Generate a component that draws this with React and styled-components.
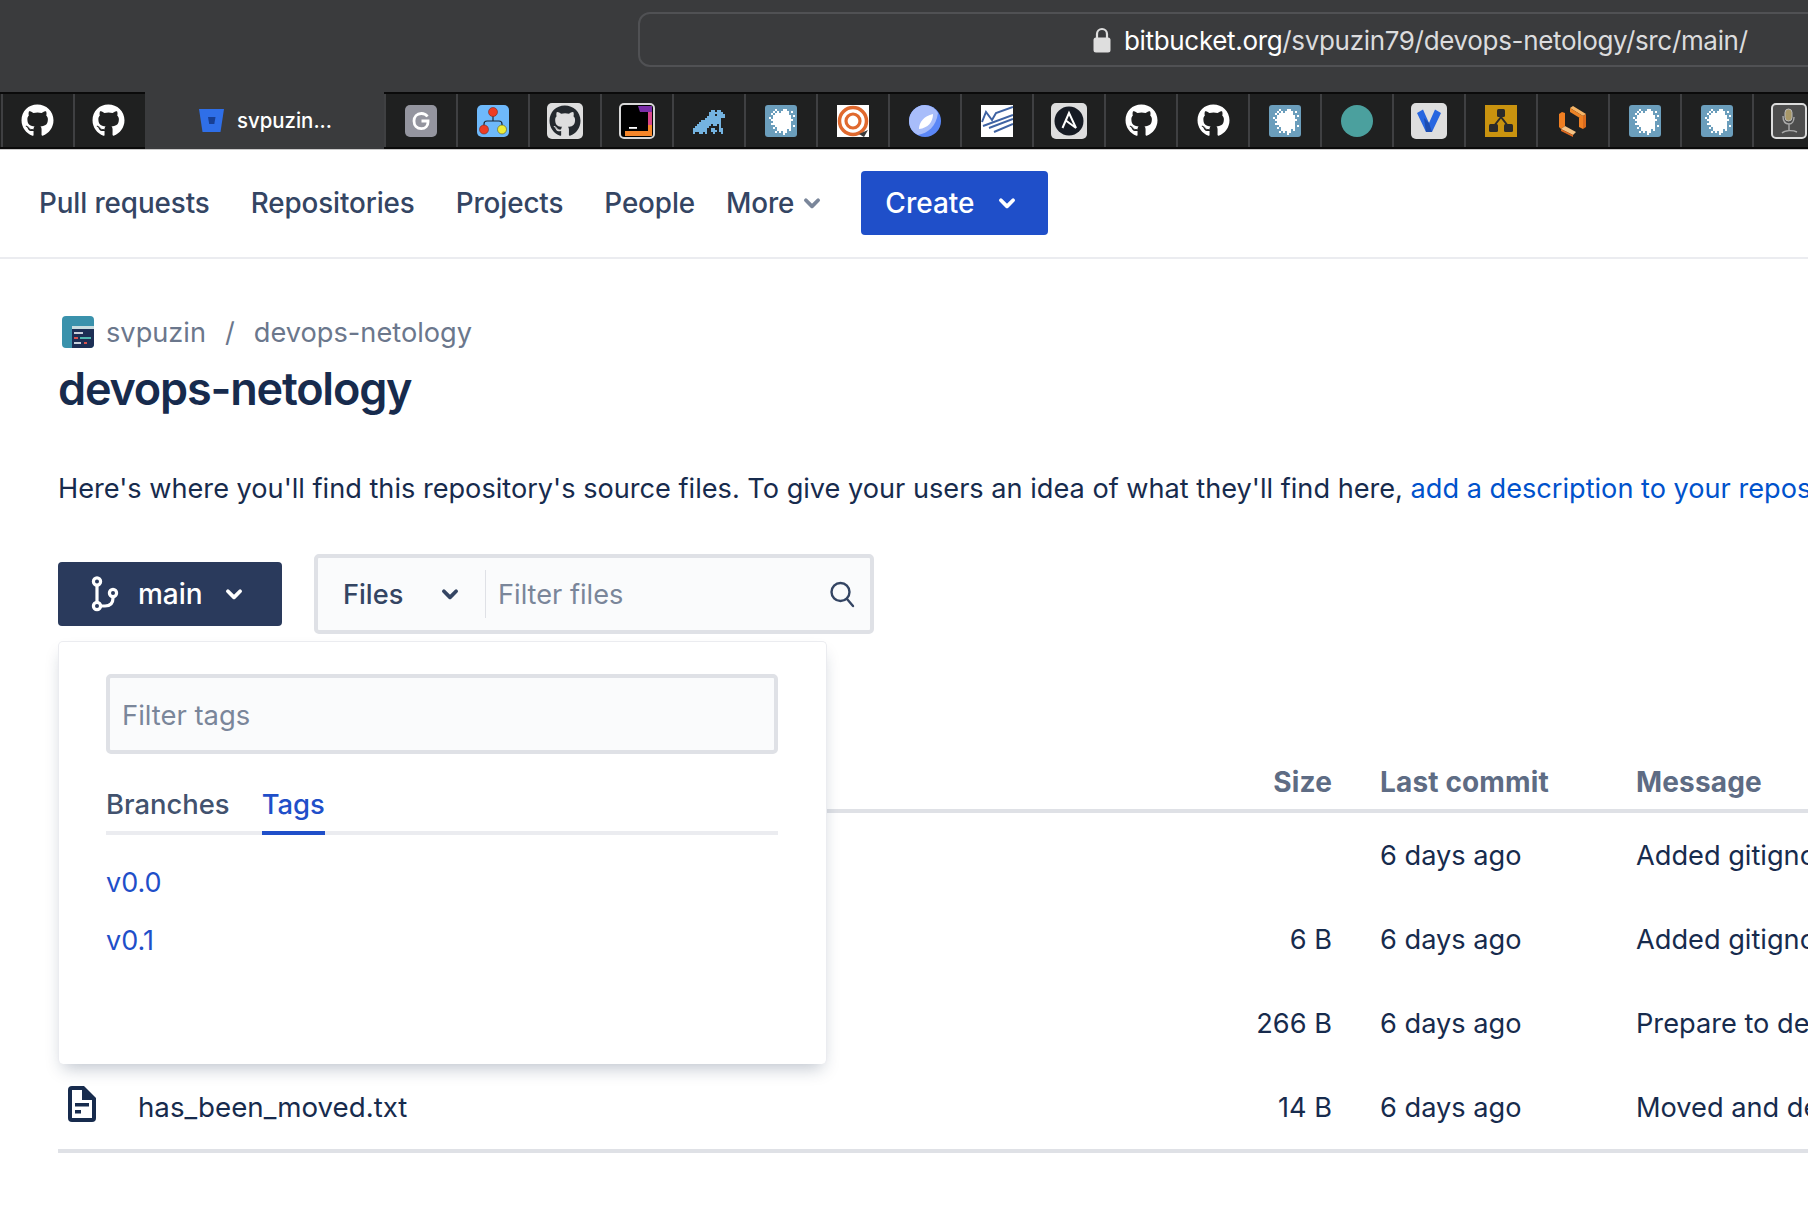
import React from 'react';
import styled, { createGlobalStyle } from 'styled-components';
import { FaGithub } from 'react-icons/fa';

const GlobalStyle = createGlobalStyle`
  html, body {
    margin: 0;
    padding: 0;
    background: #fff;
    font-family: Inter, "Noto Sans", sans-serif;
    color: #172b4d;
  }
`;

const Page = styled.div`
  width: 1808px;
  height: 1218px;
  overflow: hidden;
  background: #fff;
`;

const Toolbar = styled.div`
  height: 92px;
  box-sizing: border-box;
  padding: 12px 0 0 638px;
  background: #3a3b3d;
`;

const AddressBar = styled.div`
  width: 1300px;
  height: 55px;
  box-sizing: border-box;
  display: flex;
  align-items: center;
  gap: 13px;
  padding-left: 453px;
  border: 2px solid #505154;
  border-radius: 12px;
`;

const Url = styled.span`
  padding-top: 2px;
  font-size: 26px;
  letter-spacing: -0.33px;
  white-space: nowrap;
  color: #dcdcdd;
  b {
    font-weight: 400;
    color: #fff;
  }
`;

const TabStrip = styled.div`
  height: 57px;
  box-sizing: border-box;
  display: flex;
  padding-left: 1px;
  background: #1f2020;
  border-top: 2px solid #0a0a0a;
  border-bottom: 2px solid #0a0a0a;
  box-shadow: 0 1px 0 #c9c9c9;
`;

const Tab = styled.div`
  flex: 0 0 72px;
  box-sizing: border-box;
  display: flex;
  align-items: center;
  justify-content: center;
  padding-right: ${props => props.$nudge || 0}px;
  border-left: 2px solid #3f4042;
  color: #fff;
  font-size: 33px;
`;

const ActiveTab = styled.div`
  flex: 0 0 239px;
  box-sizing: border-box;
  display: flex;
  align-items: center;
  gap: 13px;
  padding-left: 54px;
  margin: -2px 0 -2px 0;
  background: #3a3b3d;
  color: #fff;
  font-size: 20.4px;
  font-weight: 500;
`;

const Nav = styled.nav`
  height: 110px;
  box-sizing: border-box;
  display: flex;
  align-items: center;
  padding-left: 39px;
  border-bottom: 2px solid #ebecf0;
`;

const NavLink = styled.a`
  display: flex;
  align-items: center;
  gap: 8px;
  margin-right: ${props => props.$gap}px;
  font-size: 27.8px;
  font-weight: 500;
  letter-spacing: -0.1px;
  color: #344563;
`;

const CreateButton = styled.button`
  width: 187px;
  height: 64px;
  display: flex;
  align-items: center;
  gap: 22px;
  padding: 0 0 0 24px;
  border: 0;
  border-radius: 4px;
  background: #1f4fc9;
  color: #fff;
  font-family: inherit;
  font-size: 28px;
  font-weight: 500;
`;

const Content = styled.main`
  padding: 55px 0 0 58px;
`;

const Breadcrumbs = styled.div`
  display: flex;
  align-items: center;
  height: 36px;
  margin-left: 4px;
  font-size: 27.2px;
  color: #6b778c;
  white-space: nowrap;
`;

const CrumbSeparator = styled.span`
  margin: 0 19px;
`;

const Title = styled.h1`
  margin: 11px 0 0;
  font-size: 45px;
  line-height: 56px;
  font-weight: 600;
  letter-spacing: -1.2px;
  color: #172b4d;
`;

const Description = styled.p`
  margin: 54px 0 0;
  font-size: 27.15px;
  line-height: 36px;
  white-space: nowrap;
  color: #172b4d;
  a {
    color: #0052cc;
  }
`;

const Controls = styled.div`
  position: relative;
  display: flex;
  align-items: center;
  gap: 32px;
  margin-top: 47px;
`;

const BranchButton = styled.button`
  width: 224px;
  height: 64px;
  display: flex;
  align-items: center;
  padding: 0 0 0 33px;
  border: 0;
  border-radius: 4px;
  background: #2a3a5c;
  color: #fff;
  font-family: inherit;
  font-size: 28px;
  font-weight: 500;
`;

const BranchName = styled.span`
  margin: 0 21px 0 18px;
`;

const FilterBox = styled.div`
  width: 560px;
  height: 80px;
  box-sizing: border-box;
  display: flex;
  align-items: center;
  padding-left: 25px;
  border: 4px solid #dfe1e6;
  border-radius: 5px;
  background: #fafbfc;
`;

const FilesLabel = styled.span`
  width: 97px;
  font-size: 27.2px;
  font-weight: 500;
  color: #344563;
`;

const FilterDivider = styled.span`
  width: 1px;
  height: 48px;
  margin: 0 12px 0 25px;
  background: #dfe1e6;
`;

const Placeholder = styled.span`
  flex: 1;
  padding-top: 1px;
  font-size: 27.2px;
  color: #7a869a;
`;

const SearchIcon = styled.svg`
  width: 28px;
  height: 28px;
  margin-right: 14px;
`;

const Dropdown = styled.div`
  position: absolute;
  top: 87px;
  left: 0;
  z-index: 2;
  width: 769px;
  height: 423px;
  box-sizing: border-box;
  padding: 32px 48px 0 47px;
  border: 1px solid #ebecf0;
  border-bottom: 0;
  border-radius: 5px;
  background: #fff;
  box-shadow: 0 9px 16px -5px rgba(23, 43, 77, 0.28);
`;

const TagFilter = styled.div`
  height: 80px;
  box-sizing: border-box;
  display: flex;
  align-items: center;
  padding: 1px 0 0 12px;
  border: 4px solid #dfe1e6;
  border-radius: 5px;
  background: #fafbfc;
  font-size: 27.4px;
  color: #7a869a;
`;

const DropdownTabs = styled.div`
  display: flex;
  gap: 32px;
  margin-top: 31px;
  border-bottom: 4px solid #ebecf0;
`;

const DropdownTab = styled.div`
  height: 46px;
  margin-bottom: -4px;
  border-bottom: 4px solid ${props => (props.$active ? '#1f4fc9' : 'transparent')};
  font-size: 27.4px;
  line-height: 38px;
  font-weight: 500;
  color: ${props => (props.$active ? '#1f4fc9' : '#42526e')};
`;

const TagList = styled.div`
  display: flex;
  flex-direction: column;
  gap: 22px;
  margin-top: 30px;
`;

const TagLink = styled.a`
  font-size: 27px;
  line-height: 36px;
  color: #1f4fc9;
`;

const Table = styled.div`
  margin-top: 131px;
  border-bottom: 4px solid #dfe1e6;
`;

const HeadRow = styled.div`
  display: grid;
  grid-template-columns: 1192px 130px 256px 172px;
  height: 44px;
  border-bottom: 4px solid #dfe1e6;
  font-size: 28px;
  font-weight: 700;
  letter-spacing: 0.15px;
  color: #5e6c84;
  white-space: nowrap;
`;

const Row = styled.div`
  display: grid;
  grid-template-columns: 1192px 130px 256px 172px;
  align-items: center;
  height: 84px;
  font-size: 27.2px;
  white-space: nowrap;
  color: #172b4d;
`;

const NameCell = styled.div`
  display: flex;
  align-items: center;
  gap: 42px;
  padding-left: 10px;
  font-size: 27.7px;
`;

const SizeCell = styled.div`
  padding-right: 48px;
  text-align: right;
`;

const MessageCell = styled.div`
  overflow: hidden;
`;

const PixelArt = ({ rows, color }) => (
  <g shapeRendering="crispEdges">
    {rows.map((row, y) =>
      row.split('').map((cell, x) =>
        cell === '#' ? <rect key={`${x}-${y}`} x={x} y={y} width="1" height="1" fill={color} /> : null
      )
    )}
  </g>
);

const splatRows = [
  '................',
  '................',
  '.....#...##.....',
  '....#.#.####.#..',
  '...#.#######....',
  '....#########.#.',
  '..#.#########...',
  '...###########..',
  '....#########...',
  '...##########...',
  '.....########.#.',
  '....#.#######...',
  '......#####.#...',
  '.....#.#.##.....',
  '.........#......',
  '................',
];

const frogRows = [
  '..................',
  '..........##.##...',
  '.........#######..',
  '.........###.####.',
  '........#########.',
  '.......########...',
  '.....##########...',
  '....###########...',
  '...#######.##.#...',
  '..#######.....#...',
  '.#######..##..##..',
  '.#######..###.##..',
  '.#..##.#...#...#..',
];

const Splat = () => (
  <svg width="32" height="32" viewBox="0 0 16 16">
    <rect width="16" height="16" rx="1.500" fill="#6b9ebc" />
    <PixelArt rows={splatRows} color="#fff" />
  </svg>
);

const Frog = () => (
  <svg width="36" height="26" viewBox="0 0 18 13">
    <PixelArt rows={frogRows} color="#74b3e0" />
  </svg>
);

const LetterG = () => (
  <svg width="32" height="32" viewBox="0 0 32 32">
    <rect width="32" height="32" rx="5" fill="#94959f" />
    <path d="M22.5 11.5a7.6 7.6 0 0 0-6.2-3c-4.4 0-7.3 3.2-7.3 7.6s2.900 7.500 7.300 7.500c4 0 6.700-2.600 6.700-6.700v-.9h-6.500" fill="none" stroke="#fff" strokeWidth="2.800" />
  </svg>
);

const TreeIcon = () => (
  <svg width="32" height="32" viewBox="0 0 32 32">
    <rect width="32" height="32" rx="5" fill="#6eb9fb" />
    <path d="M16 10v6M7 21v-2q0-3 3-3h12q3 0 3 3v2" fill="none" stroke="#1d2b3a" strokeWidth="1.200" />
    <circle cx="16" cy="7" r="4.500" fill="#ee3c24" stroke="#7a2a20" strokeWidth=".6" />
    <circle cx="7" cy="24.500" r="4.500" fill="#ee3c24" stroke="#7a2a20" strokeWidth=".6" />
    <circle cx="25" cy="24.500" r="4.500" fill="#ecec3a" stroke="#55552a" strokeWidth=".6" />
  </svg>
);

const GreyTile = styled.div`
  width: 36px;
  height: 36px;
  display: flex;
  align-items: center;
  justify-content: center;
  border-radius: 5px;
  background: #dedede;
  color: ${props => props.$color || '#24292e'};
  font-size: 32px;
`;

const JetBrains = () => (
  <svg width="36" height="36" viewBox="0 0 36 36">
    <rect x="1" y="1" width="34" height="34" rx="4" fill="#000" stroke="#d8d8d8" strokeWidth="2" />
    <path d="M19 3h14v14h-4v-8h-8z" fill="#7b2ea8" />
    <path d="M29 9h4v15h-4z" fill="#d8458a" />
    <path d="M6 33v-5h23v-6h4v11z" fill="#f5862a" />
    <rect x="10" y="24" width="8" height="1.800" fill="#fff" />
  </svg>
);

const Target = () => (
  <svg width="32" height="32" viewBox="0 0 32 32">
    <rect width="32" height="32" fill="#fff" />
    <circle cx="16" cy="16" r="13.500" fill="none" stroke="#e0692e" strokeWidth="3.500" />
    <circle cx="16" cy="16" r="7" fill="none" stroke="#e0692e" strokeWidth="3.200" />
    <path d="M31 25l-4 7-5-3z" fill="#3a3a3a" />
  </svg>
);

const LeafCircle = () => (
  <svg width="32" height="32" viewBox="0 0 32 32">
    <circle cx="16" cy="16" r="16" fill="#5b87f7" />
    <path d="M16 0a16 16 0 0 0-16 16c0 6 3 11 9 14 10-2 18-8 20-22A16 16 0 0 0 16 0z" fill="#a8bdfa" />
    <path d="M10 24c0-7 5-13 14-15 0 8-5 14-14 15z" fill="#fff" />
  </svg>
);

const Stripes = () => (
  <svg width="32" height="32" viewBox="0 0 32 32">
    <rect width="32" height="32" fill="#fff" />
    <path d="M1 17l4-10 6 8 4-7 17-6M2 21l30-11M8 23l24-9M13 27l19-8" fill="none" stroke="#3f63a3" strokeWidth="2" />
  </svg>
);

const Ansible = () => (
  <GreyTile>
    <svg width="30" height="30" viewBox="0 0 30 30">
      <circle cx="15" cy="15" r="14.500" fill="#161b24" />
      <path d="M8.500 22L15 7l7 15-9.500-7" fill="none" stroke="#fff" strokeWidth="2" />
    </svg>
  </GreyTile>
);

const TealDot = styled.span`
  width: 32px;
  height: 32px;
  border-radius: 50%;
  background: #4ba09e;
`;

const Vagrant = () => (
  <GreyTile>
    <svg width="26" height="26" viewBox="0 0 26 26">
      <path d="M1 5l6-3.500L13 15l6-13.500L25 5l-9 19-6 0z" fill="#2766e0" />
      <path d="M10 24l-2-14 5 5 3 9z" fill="#1d4db0" />
    </svg>
  </GreyTile>
);

const Hierarchy = () => (
  <svg width="32" height="32" viewBox="0 0 32 32">
    <rect width="32" height="32" fill="#c9930f" />
    <path d="M16 12L9 21M16 12l7 9" stroke="#2a2a2a" strokeWidth="2" />
    <rect x="12" y="4" width="8" height="8" rx="1.500" fill="#2a2a2a" />
    <rect x="4" y="19" width="9" height="8" rx="1.500" fill="#2a2a2a" />
    <rect x="19" y="19" width="9" height="8" rx="1.500" fill="#2a2a2a" />
  </svg>
);

const HexBlocks = () => (
  <svg width="28" height="32" viewBox="0 0 28 32">
    <polygon points="11,3 14,1 27,9 24,11" fill="#f6b567" />
    <polygon points="11,3 24,11 24,15 11,7" fill="#ec8326" />
    <polygon points="24,11 27,9 27,22 24,24" fill="#d96a1d" />
    <polygon points="20,13 24,11 24,24 20,22" fill="#f07f22" />
    <polygon points="0,9 3,7 6,8 6,21 2,24 0,22" fill="#f07f22" />
    <polygon points="2,24 6,21 17,27 14,30" fill="#f6c384" />
    <polygon points="2,24 14,30 14,32 2,26" fill="#e0691f" />
  </svg>
);

const Microphone = () => (
  <svg width="36" height="36" viewBox="0 0 36 36">
    <rect x="1" y="1" width="34" height="34" rx="4" fill="#4d4d4d" stroke="#dcdcdc" strokeWidth="2" />
    <rect x="14" y="6" width="7" height="12" rx="3.500" fill="#a89868" stroke="#bbb" />
    <path d="M12 13c0 6 3 8 6 8 3 0 5-3 5-7M18 21v6M11 30c3-3 11-3 15-1" fill="none" stroke="#aaa" strokeWidth="1.400" />
  </svg>
);

const BitbucketMark = () => (
  <svg width="25" height="23" viewBox="0 0 25 23">
    <path d="M0 0h25l-3.500 23H3.500z" fill="#2f6fe8" />
    <path d="M9 8h7.500l-1.200 7H10.200z" fill="#173f94" />
  </svg>
);

const LockIcon = () => (
  <svg width="18" height="26" viewBox="0 0 18 26">
    <path d="M4 11V7a5 5 0 0 1 10 0v4" fill="none" stroke="#dedede" strokeWidth="2.200" />
    <rect x="0.500" y="10.500" width="17" height="15" rx="2.500" fill="#dedede" />
  </svg>
);

const Chevron = ({ color = 'currentColor', size = 20 }) => (
  <svg width={size} height={size} viewBox="0 0 18 18">
    <path d="M3.500 6.500l5.500 5.500 5.500-5.500" fill="none" stroke={color} strokeWidth="3.400" strokeLinecap="round" strokeLinejoin="round" />
  </svg>
);

const BranchIcon = () => (
  <svg width="29" height="36" viewBox="0 0 29 36" fill="none" stroke="#fff" strokeWidth="3.200">
    <circle cx="6" cy="5.500" r="3.600" />
    <circle cx="6" cy="30" r="3.600" />
    <circle cx="22" cy="17" r="3.600" />
    <path d="M6 9v17M10 30h4q8 0 8-8v-1" />
  </svg>
);

const FileGlyph = styled.svg`
  width: 28px;
  height: 36px;
  margin-top: -6px;
`;

const FileIcon = () => (
  <FileGlyph viewBox="0 0 28 36">
    <path d="M4 0h12l12 12v20a4 4 0 0 1-4 4H4a4 4 0 0 1-4-4V4a4 4 0 0 1 4-4z" fill="#172b4d" />
    <path d="M4 4h10v10h10v18H4z" fill="#fff" />
    <rect x="7" y="17" width="14" height="3.500" fill="#172b4d" />
    <rect x="7" y="24" width="6" height="3.500" fill="#172b4d" />
  </FileGlyph>
);

const AvatarIcon = styled.svg`
  width: 32px;
  height: 32px;
  margin-right: 12px;
`;

const Avatar = () => (
  <AvatarIcon viewBox="0 0 32 32">
    <rect width="32" height="32" rx="4" fill="#3a92ac" />
    <path d="M10 10h22v18a4 4 0 0 1-4 4H10z" fill="#1d2f55" />
    <rect x="10" y="10" width="22" height="3" fill="#c9dde0" />
    <rect x="12" y="16" width="9" height="2" fill="#c8d0dc" />
    <rect x="12" y="21" width="4" height="2" fill="#d9534f" />
    <rect x="18" y="21" width="11" height="2" fill="#4fb7b0" />
    <rect x="12" y="26" width="7" height="2" fill="#c8d0dc" />
    <rect x="22" y="26" width="3" height="2" fill="#d9534f" />
  </AvatarIcon>
);

const rightTabs = [
  <LetterG />,
  <TreeIcon />,
  <GreyTile><FaGithub /></GreyTile>,
  <JetBrains />,
  <Frog />,
  <Splat />,
  <Target />,
  <LeafCircle />,
  <Stripes />,
  <Ansible />,
  <FaGithub />,
  <FaGithub />,
  <Splat />,
  <TealDot />,
  <Vagrant />,
  <Hierarchy />,
  <HexBlocks />,
  <Splat />,
  <Splat />,
  <Microphone />,
];

const files = [
  { name: '', size: '', message: 'Added gitignore' },
  { name: '', size: '6 B', message: 'Added gitignore' },
  { name: '', size: '266 B', message: 'Prepare to delete and move' },
  { name: 'has_been_moved.txt', size: '14 B', message: 'Moved and deleted' },
];

export default function App() {
  return (
    <Page>
      <GlobalStyle />
      <Toolbar>
        <AddressBar>
          <LockIcon />
          <Url><b>bitbucket.org</b>/svpuzin79/devops-netology/src/main/</Url>
        </AddressBar>
      </Toolbar>
      <TabStrip>
        <Tab $nudge={2}><FaGithub /></Tab>
        <Tab $nudge={4}><FaGithub /></Tab>
        <ActiveTab><BitbucketMark />svpuzin...</ActiveTab>
        {rightTabs.map((icon, i) => <Tab key={i}>{icon}</Tab>)}
      </TabStrip>
      <Nav>
        <NavLink $gap={41}>Pull requests</NavLink>
        <NavLink $gap={41}>Repositories</NavLink>
        <NavLink $gap={41}>Projects</NavLink>
        <NavLink $gap={31}>People</NavLink>
        <NavLink $gap={39}>More <Chevron color="#7a869a" /></NavLink>
        <CreateButton>Create <Chevron /></CreateButton>
      </Nav>
      <Content>
        <Breadcrumbs>
          <Avatar />
          svpuzin
          <CrumbSeparator>/</CrumbSeparator>
          devops-netology
        </Breadcrumbs>
        <Title>devops-netology</Title>
        <Description>
          Here's where you'll find this repository's source files. To give your users an idea of what they'll find here,{' '}
          <a>add a description to your repository</a>
        </Description>
        <Controls>
          <BranchButton>
            <BranchIcon />
            <BranchName>main</BranchName>
            <Chevron />
          </BranchButton>
          <FilterBox>
            <FilesLabel>Files</FilesLabel>
            <Chevron color="#344563" />
            <FilterDivider />
            <Placeholder>Filter files</Placeholder>
            <SearchIcon viewBox="0 0 28 28" fill="none" stroke="#344563" strokeWidth="2.400" strokeLinecap="round">
              <circle cx="12.500" cy="12" r="9" />
              <path d="M19 19l6 7" />
            </SearchIcon>
          </FilterBox>
          <Dropdown>
            <TagFilter>Filter tags</TagFilter>
            <DropdownTabs>
              <DropdownTab>Branches</DropdownTab>
              <DropdownTab $active>Tags</DropdownTab>
            </DropdownTabs>
            <TagList>
              <TagLink>v0.0</TagLink>
              <TagLink>v0.1</TagLink>
            </TagList>
          </Dropdown>
        </Controls>
        <Table>
          <HeadRow>
            <div />
            <SizeCell>Size</SizeCell>
            <div>Last commit</div>
            <MessageCell>Message</MessageCell>
          </HeadRow>
          {files.map((file, i) => (
            <Row key={i}>
              <NameCell>
                {file.name && <FileIcon />}
                {file.name}
              </NameCell>
              <SizeCell>{file.size}</SizeCell>
              <div>6 days ago</div>
              <MessageCell>{file.message}</MessageCell>
            </Row>
          ))}
        </Table>
      </Content>
    </Page>
  );
}
